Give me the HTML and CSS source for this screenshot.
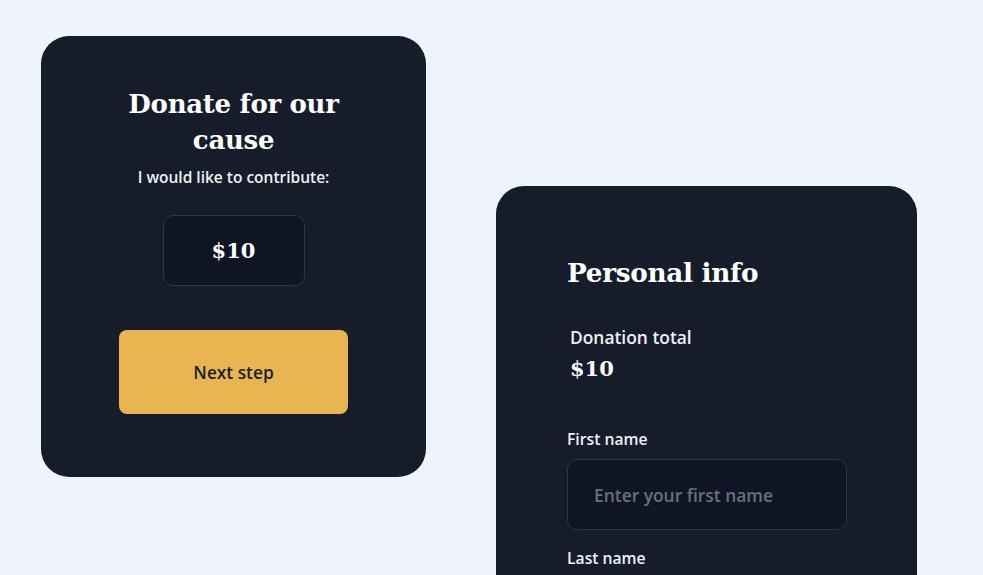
FILE: index.html
```html
<!DOCTYPE html>
<html lang="en">
<head>
<meta charset="utf-8">
<title>Donate</title>
<link rel="stylesheet" href="styles.css">
</head>
<body>
<main class="stage">
  <section class="card card-donate">
    <h1 class="title">Donate for our cause</h1>
    <p class="subtitle">I would like to contribute:</p>
    <div class="amount">$10</div>
    <button class="next-btn" type="button">Next step</button>
  </section>
  <section class="card card-info">
    <h2 class="info-title">Personal info</h2>
    <div class="total">
      <div class="total-label">Donation total</div>
      <div class="total-value">$10</div>
    </div>
    <label class="field-label" for="fn">First name</label>
    <input class="field" id="fn" type="text" placeholder="Enter your first name">
    <label class="field-label last" for="ln">Last name</label>
  </section>
</main>
</body>
</html>
```
FILE: styles.css
```css
* { box-sizing: border-box; }
html, body { margin: 0; padding: 0; }
body {
  background: #eff3fb;
  width: 983px;
  height: 575px;
  overflow: hidden;
  font-family: "Open Sans", "Noto Sans", sans-serif;
}
.stage {
  display: flex;
  align-items: flex-start;
  gap: 70px;
  padding: 36px 0 0 41px;
}
.card {
  background: #171c2b;
  border-radius: 28px;
  color: #ffffff;
}
.card-donate {
  width: 385px;
  height: 441px;
  display: flex;
  flex-direction: column;
  align-items: center;
  padding-top: 50px;
}
.title {
  margin: 0;
  width: 240px;
  text-align: center;
  font-family: "DejaVu Serif", "Liberation Serif", serif;
  font-weight: 700;
  font-size: 26px;
  line-height: 36px;
  letter-spacing: -0.3px;
}
.subtitle {
  margin: 9px 0 0;
  font-size: 15.5px;
  font-weight: 600;
  line-height: 20px;
  color: #eef0f5;
}
.amount {
  margin-top: 28px;
  width: 142px;
  height: 71px;
  border: 1px solid #2e3546;
  border-radius: 10px;
  background: #0f1524;
  display: flex;
  align-items: center;
  justify-content: center;
  font-family: "DejaVu Serif", "Liberation Serif", serif;
  font-weight: 700;
  font-size: 21px;
}
.next-btn {
  margin-top: 44px;
  width: 229px;
  height: 84px;
  border: none;
  border-radius: 8px;
  background: #e8b550;
  color: #1a1f2e;
  font-family: "Open Sans", "Noto Sans", sans-serif;
  font-weight: 600;
  font-size: 17.3px;
}
.card-info {
  margin-top: 150px;
  width: 421px;
  height: 440px;
  padding: 70px 0 0 71px;
  display: flex;
  flex-direction: column;
  align-items: flex-start;
}
.info-title {
  margin: 0;
  font-family: "DejaVu Serif", "Liberation Serif", serif;
  font-weight: 700;
  font-size: 26.3px;
  line-height: 34px;
  letter-spacing: -0.3px;
}
.total {
  margin: 36px 0 0 3px;
}
.total-label {
  font-size: 17.4px;
  font-weight: 600;
  line-height: 22px;
  color: #eef0f5;
}
.total-value {
  margin-top: 8px;
  font-family: "DejaVu Serif", "Liberation Serif", serif;
  font-weight: 700;
  font-size: 21px;
  line-height: 26px;
}
.field-label {
  margin-top: 47px;
  font-size: 15.7px;
  font-weight: 600;
  line-height: 20px;
  color: #eef0f5;
}
.field {
  margin-top: 10px;
  width: 280px;
  height: 71px;
  border: 1px solid #2e3546;
  border-radius: 10px;
  background: #0f1524;
  padding: 0 26px;
  font-family: "Open Sans", "Noto Sans", sans-serif;
  font-size: 17.4px;
  font-weight: 600;
  color: #ffffff;
  outline: none;
}
.field::placeholder { color: #6a6f7e; }
.field-label.last { margin-top: 18px; }
```
